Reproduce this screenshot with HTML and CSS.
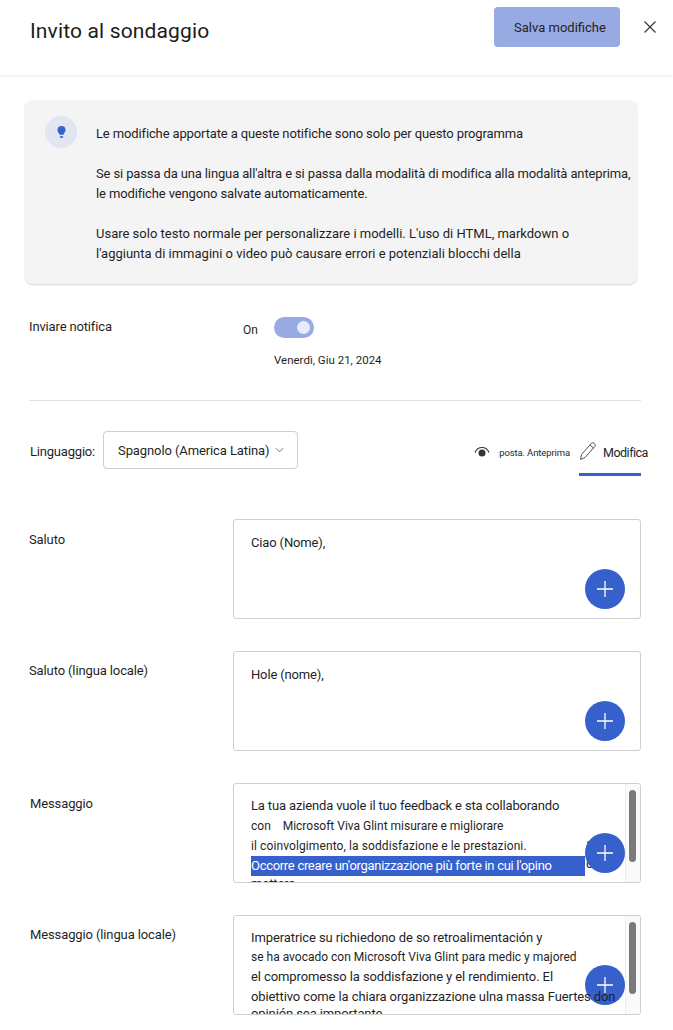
FILE: index.html
```html
<!DOCTYPE html>
<html lang="it">
<head>
<meta charset="utf-8">
<title>Invito al sondaggio</title>
<link rel="stylesheet" href="styles.css">
</head>
<body>
<header class="header">
  <h1 class="title">Invito al sondaggio</h1>
  <div class="header-actions">
    <button class="save">Salva modifiche</button>
    <svg class="close" viewBox="0 0 14 14" width="14" height="14"><path d="M1.5 1.5l11 11M12.5 1.5l-11 11" stroke="#333" stroke-width="1.1" fill="none"/></svg>
  </div>
</header>
<main class="main">
  <section class="notice">
    <div class="bulb">
      <svg viewBox="0 0 12 16" width="11" height="15"><path d="M6 1a4.4 4.4 0 0 0-4.4 4.4c0 1.8 1 2.7 1.7 3.700.4.6.5 1 .6 1.400h4.200c.1-.4.2-.8.6-1.400.7-1 1.700-1.900 1.700-3.700A4.400 4.400 0 0 0 6 1z" fill="#3a62c9"/><path d="M4.200 12h3.600v.8c0 .7-.8 1.200-1.800 1.200s-1.800-.5-1.800-1.200z" fill="#3a62c9"/></svg>
    </div>
    <div class="notice-text">
      <p class="notice-p notice-tight">Le modifiche apportate a queste notifiche sono solo per questo programma</p>
      <p class="notice-p notice-tight"><span class="line">Se si passa da una lingua all'altra e si passa dalla modalità di modifica alla modalità anteprima,</span><span class="line">le modifiche vengono salvate automaticamente.</span></p>
      <p class="notice-p"><span class="line">Usare solo testo normale per personalizzare i modelli. L'uso di HTML, markdown o</span><span class="line">l'aggiunta di immagini o video può causare errori e potenziali blocchi della</span></p>
    </div>
  </section>
  <section class="send">
    <div class="send-label">Inviare notifica</div>
    <div class="send-control">
      <div class="toggle-row">
        <span class="on">On</span>
        <span class="toggle"><span class="knob"></span></span>
      </div>
      <div class="date">Venerdì, Giu 21, 2024</div>
    </div>
  </section>
  <hr class="rule">
  <section class="lang-row">
    <div class="lang">
      <span class="lang-label">Linguaggio:</span>
      <div class="select">
        <span>Spagnolo (America Latina)</span>
        <svg viewBox="0 0 10 6" width="9" height="6"><path d="M1 1l4 4 4-4" stroke="#666" stroke-width="1" fill="none"/></svg>
      </div>
    </div>
    <div class="tabs">
      <div class="tab-preview">
        <svg viewBox="0 0 16 12" width="16" height="12"><path d="M1 6.500C2.500 3 5 1.500 8 1.500s5.500 1.500 7 5" stroke="#333" stroke-width="1.200" fill="none"/><circle cx="8" cy="7" r="3.500" fill="#333"/></svg>
        <span>posta. Anteprima</span>
      </div>
      <div class="tab-edit">
        <svg class="pencil" viewBox="0 0 18 20" width="18" height="20"><path d="M1.500 18.500l1-5L12.500 2.200a1.800 1.800 0 0 1 2.500 0l.8.8a1.800 1.800 0 0 1 0 2.500L6 16.500z M11 4l4 3.500" stroke="#555" stroke-width="1" fill="none"/></svg>
        <span class="tab-edit-label">Modifica</span>
      </div>
    </div>
  </section>
  <section class="fields">
    <div class="field">
      <div class="field-label">Saluto</div>
      <div class="box">
        <div class="box-text"><span class="line">Ciao (Nome),</span></div>
        <button class="plus"><svg viewBox="0 0 16 16" width="16" height="16"><path d="M8 0v16M0 8h16" stroke="#fff" stroke-width="1.300"/></svg></button>
      </div>
    </div>
    <div class="field">
      <div class="field-label">Saluto (lingua locale)</div>
      <div class="box">
        <div class="box-text"><span class="line">Hole (nome),</span></div>
        <button class="plus"><svg viewBox="0 0 16 16" width="16" height="16"><path d="M8 0v16M0 8h16" stroke="#fff" stroke-width="1.300"/></svg></button>
      </div>
    </div>
    <div class="field">
      <div class="field-label field-label-msg">Messaggio</div>
      <div class="box box-scroll">
        <div class="box-text box-text-long">
          <span class="line">La tua azienda vuole il tuo feedback e sta collaborando</span>
          <span class="line small">con &nbsp;&nbsp; Microsoft Viva Glint misurare e migliorare</span>
          <span class="line small small-wide">il coinvolgimento, la soddisfazione e le prestazioni.</span>
          <span class="line selected">Occorre creare un'organizzazione più forte in cui l'opino</span>
          <span class="line last-line">matters.</span>
        </div>
        <div class="scroll"><span class="thumb"></span></div>
        <span class="peek peek-a">a</span>
        <span class="peek peek-c">c</span>
        <button class="plus plus-scroll"><svg viewBox="0 0 16 16" width="16" height="16"><path d="M8 0v16M0 8h16" stroke="#fff" stroke-width="1.300"/></svg></button>
      </div>
    </div>
    <div class="field">
      <div class="field-label field-label-msg">Messaggio (lingua locale)</div>
      <div class="box box-scroll">
        <div class="box-text box-text-long box-text-local">
          <span class="line">Imperatrice su richiedono de so retroalimentación y</span>
          <span class="line small">se ha avocado con Microsoft Viva Glint para medic y majored</span>
          <span class="line">el compromesso la soddisfazione y el rendimiento. El</span>
          <span class="line over-plus">obiettivo come la chiara organizzazione ulna massa Fuertes don</span>
          <span class="line last-line">opinión sea importante.</span>
        </div>
        <div class="scroll"><span class="thumb"></span></div>
        <button class="plus plus-scroll"><svg viewBox="0 0 16 16" width="16" height="16"><path d="M8 0v16M0 8h16" stroke="#fff" stroke-width="1.300"/></svg></button>
      </div>
    </div>
  </section>
</main>
</body>
</html>
```
FILE: styles.css
```css
* { box-sizing: border-box; }
html, body { margin: 0; padding: 0; height: 100%; overflow: hidden; background: #fff; }
body { font-family: Roboto, "Liberation Sans", sans-serif; color: #1f1f1f; font-size: 13px; }
.line { display: block; white-space: nowrap; }

.header { height: 75px; display: flex; justify-content: space-between; align-items: flex-start; padding: 7px 16px 0 30px; box-shadow: 0 1px 4px rgba(0,0,0,.08); }
.title { margin: 10px 0 0; font-size: 21px; line-height: 28px; font-weight: 400; letter-spacing: .15px; color: #1c1c1c; }
.header-actions { display: flex; align-items: flex-start; gap: 23px; }
.save { width: 126px; height: 40px; border: 0; border-radius: 4px; background: #98aae2; color: #242424; font: inherit; font-size: 13px; padding: 0 0 0 6px; }
.close { margin-top: 13px; }

.main { padding: 25px 32px 0 25px; }
.notice { width: 612px; height: 184px; background: #f4f4f4; border-radius: 8px; box-shadow: 0 1px 2px rgba(0,0,0,.18); padding: 16px 0 0 20px; display: flex; gap: 19px; }
.bulb { width: 32px; height: 32px; border-radius: 50%; background: #e2e6f3; display: flex; align-items: center; justify-content: center; flex: none; }
.notice-text { padding-top: 8px; font-size: 13px; line-height: 20px; }
.notice-p { margin: 0 0 20px; }
.notice-tight { letter-spacing: -.13px; }

.send { display: flex; margin: 30px 0 0 4px; height: 86px; }
.send-label { width: 214px; font-size: 13px; letter-spacing: -.15px; line-height: 20px; padding-top: 3px; }
.send-control { display: flex; flex-direction: column; }
.toggle-row { display: flex; align-items: center; gap: 16px; margin-top: 3px; }
.on { font-size: 12px; padding-top: 4px; }
.toggle { width: 40px; height: 21px; border-radius: 11px; background: #98aae2; display: flex; align-items: center; justify-content: flex-end; padding-right: 4px; }
.knob { width: 13px; height: 13px; border-radius: 50%; background: #e8ecf8; }
.date { margin: 14px 0 0 31px; font-size: 11.5px; line-height: 16px; white-space: nowrap; }

.rule { margin: 0 -4px 0 4px; border: 0; border-top: 1px solid #e0e0e0; width: 612px; }
.lang-row { display: flex; justify-content: space-between; align-items: flex-start; margin: 30px -4px 0 5px; width: 611px; height: 88px; }
.lang { display: flex; align-items: center; gap: 8px; }
.lang-label { font-size: 13px; letter-spacing: -.2px; padding-top: 3px; }
.select { width: 195px; height: 38px; border: 1px solid #cfcfcf; border-radius: 4px; display: flex; align-items: center; gap: 6px; padding: 0 0 0 14px; font-size: 13px; letter-spacing: -.1px; white-space: nowrap; }
.tabs { display: flex; align-items: flex-start; gap: 9px; }
.tab-preview { display: flex; align-items: center; gap: 9px; font-size: 9.5px; letter-spacing: -.12px; height: 38px; padding-top: 4px; white-space: nowrap; }
.tab-edit { display: flex; align-items: flex-start; gap: 6px; width: 62px; height: 45px; padding-top: 10px; border-bottom: 3px solid #3660cc; font-size: 12.5px; letter-spacing: -.5px; line-height: 20px; white-space: nowrap; }
.tab-edit-label { padding-top: 2px; }
.pencil { flex: none; }

.fields { display: flex; flex-direction: column; gap: 32px; margin-left: 4px; }
.field { display: flex; width: 612px; height: 100px; }
.field-label { width: 204px; flex: none; font-size: 13px; letter-spacing: -.12px; padding-top: 12px; line-height: 18px; }
.field:nth-child(2) .field-label { padding-top: 11px; }
.field:nth-child(4) .field-label { padding-top: 11px; }
.field-label-msg { padding-left: 1px; }
.box { position: relative; width: 408px; height: 100px; border: 1px solid #cfcfcf; border-radius: 3px; overflow: hidden; display: flex; background: #fff; }
.box-text { flex: 1; padding: 13px 0 0 17px; font-size: 13px; letter-spacing: -.15px; line-height: 20px; color: #1f1f1f; }
.box-text-long { line-height: 20px; padding-top: 12px; min-width: 0; }
.box-text-local { line-height: 19.5px; letter-spacing: -.1px; }
.small { font-size: 12px; letter-spacing: 0; }
.small-wide { letter-spacing: .1px; }
.selected { background: #3660cc; color: #fff; width: 334px; overflow: hidden; letter-spacing: -.3px; }
.last-line { margin-top: -2px; }
.over-plus { position: relative; z-index: 1; }
.scroll { flex: none; width: 15px; background: #fafafa; border-left: 1px solid #ececec; padding: 6px 0 0 3px; }
.thumb { display: block; width: 7px; height: 72px; border-radius: 4px; background: #7a7a7a; }
.peek { position: absolute; left: 352px; font-size: 13px; line-height: 20px; }
.peek-a { top: 50px; }
.peek-c { top: 70px; }
.plus { position: absolute; right: 15px; bottom: 9px; width: 40px; height: 40px; border: 0; border-radius: 50%; background: #3660cc; display: flex; align-items: center; justify-content: center; padding: 0; }
```
